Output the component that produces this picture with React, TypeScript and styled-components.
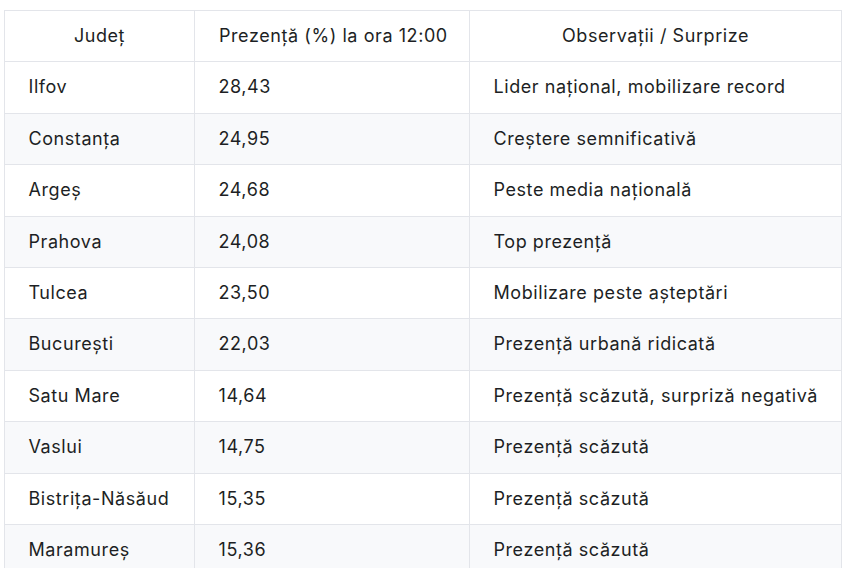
import React from "react";
import styled, { createGlobalStyle } from "styled-components";

const GlobalStyle = createGlobalStyle`
  html, body {
    margin: 0;
    padding: 0;
    background: #ffffff;
  }
  body {
    font-family: Inter, "Noto Sans", "Liberation Sans", sans-serif;
    color: #1d1f24;
  }
`;

const Page = styled.div`
  padding: 10px 4px 0 4px;
`;

const Table = styled.table`
  width: 837px;
  border-collapse: collapse;
  table-layout: fixed;
  font-size: 18px;
  line-height: 26.4px;
  letter-spacing: 0.57px;
  border: 1px solid #e3e5ea;
`;

const HeadCell = styled.th<{ $width: number }>`
  box-sizing: border-box;
  width: ${(p) => p.$width}px;
  padding: 12px 24px;
  font-weight: 400;
  text-align: center;
  border: 1px solid #e3e5ea;
  white-space: nowrap;
`;

const Row = styled.tr<{ $striped: boolean }>`
  background: ${(p) => (p.$striped ? "#f8f9fb" : "#ffffff")};
`;

const Cell = styled.td`
  box-sizing: border-box;
  padding: 12px 24px 12px 23.5px;
  text-align: left;
  border: 1px solid #e3e5ea;
  white-space: nowrap;
`;

interface CountyRow {
  county: string;
  turnout: string;
  note: string;
}

const rows: CountyRow[] = [
  { county: "Ilfov", turnout: "28,43", note: "Lider național, mobilizare record" },
  { county: "Constanța", turnout: "24,95", note: "Creștere semnificativă" },
  { county: "Argeș", turnout: "24,68", note: "Peste media națională" },
  { county: "Prahova", turnout: "24,08", note: "Top prezență" },
  { county: "Tulcea", turnout: "23,50", note: "Mobilizare peste așteptări" },
  { county: "București", turnout: "22,03", note: "Prezență urbană ridicată" },
  { county: "Satu Mare", turnout: "14,64", note: "Prezență scăzută, surpriză negativă" },
  { county: "Vaslui", turnout: "14,75", note: "Prezență scăzută" },
  { county: "Bistrița-Năsăud", turnout: "15,35", note: "Prezență scăzută" },
  { county: "Maramureș", turnout: "15,36", note: "Prezență scăzută" },
];

export default function App() {
  return (
    <>
      <GlobalStyle />
      <Page>
        <Table>
          <thead>
            <tr>
              <HeadCell $width={190}>Județ</HeadCell>
              <HeadCell $width={275}>Prezență (%) la ora 12:00</HeadCell>
              <HeadCell $width={372}>Observații / Surprize</HeadCell>
            </tr>
          </thead>
          <tbody>
            {rows.map((row, i) => (
              <Row key={row.county} $striped={i % 2 === 1}>
                <Cell>{row.county}</Cell>
                <Cell>{row.turnout}</Cell>
                <Cell>{row.note}</Cell>
              </Row>
            ))}
          </tbody>
        </Table>
      </Page>
    </>
  );
}
